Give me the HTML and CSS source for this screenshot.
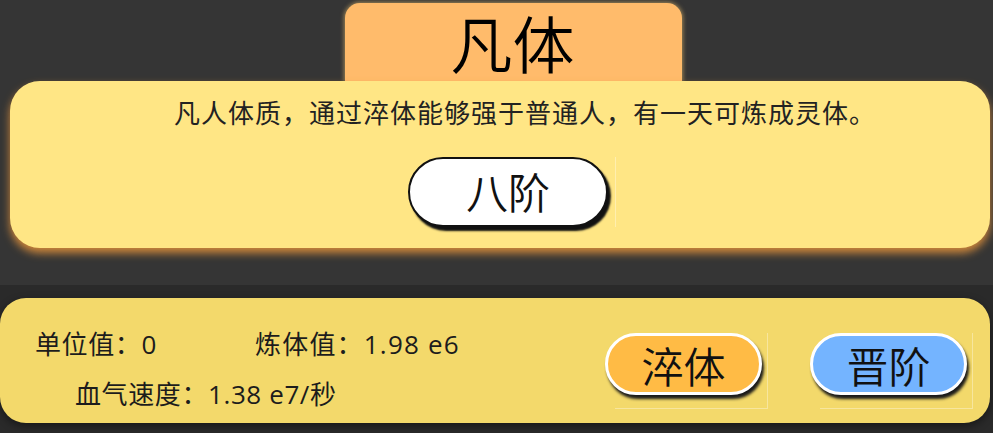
FILE: index.html
```html
<!DOCTYPE html>
<html lang="zh-CN">
<head>
<meta charset="utf-8">
<title>凡体</title>
<link rel="stylesheet" href="styles.css">
</head>
<body>
<div class="top">
  <div class="title-tab"><span class="title-text">凡体</span></div>
  <div class="card">
    <p class="desc">凡人体质，通过淬体能够强于普通人，有一天可炼成灵体。</p>
    <div class="level-row">
      <div class="level-wrap"><div class="level-btn">八阶</div></div>
    </div>
  </div>
</div>
<div class="bottom">
  <div class="panel">
    <div class="stats">
      <div class="stat unit">单位值：0</div>
      <div class="stat refine">炼体值：1.98 e6</div>
      <div class="stat speed">血气速度：1.38 e7/秒</div>
    </div>
    <div class="actions">
      <div class="act-wrap"><div class="act-btn orange">淬体</div></div>
      <div class="act-wrap"><div class="act-btn blue">晋阶</div></div>
    </div>
  </div>
</div>
</body>
</html>
```
FILE: styles.css
```css
html, body {
  margin: 0;
  padding: 0;
}
body {
  width: 993px;
  height: 433px;
  overflow: hidden;
  background: #2a2a2a;
  font-family: "Noto Sans CJK SC", "Noto Sans", sans-serif;
  font-weight: 350;
  color: #1c1c1c;
}
.top {
  height: 285px;
  background: #353535;
  padding-top: 3px;
  box-sizing: border-box;
}
.title-tab {
  margin-left: 345px;
  width: 337px;
  height: 78px;
  background: #ffbb6b;
  border-radius: 15px 15px 0 0;
  box-shadow: 0 0 4px 1px rgba(230, 190, 110, 0.6);
  text-align: center;
  box-sizing: border-box;
  padding-right: 2px;
}
.title-text {
  display: block;
  font-size: 62px;
  line-height: 78px;
  color: #000;
}
.card {
  position: relative;
  margin: 0 3px 0 10px;
  height: 167px;
  background: #ffe685;
  border-radius: 30px;
  box-shadow: 0 5px 9px rgba(235, 150, 60, 0.85);
  box-sizing: border-box;
  padding-top: 14px;
}
.desc {
  margin: 0;
  padding-left: 50px;
  text-align: center;
  font-size: 26px;
  font-weight: 400;
  letter-spacing: 1px;
  line-height: 34px;
  color: #222;
}
.level-row {
  display: flex;
  padding-left: 398px;
  margin-top: 28px;
}
.level-wrap {
  border-right: 1px solid rgba(255, 255, 255, 0.35);
  padding-right: 7px;
}
.level-btn {
  width: 196px;
  height: 66px;
  background: #fff;
  border: 2px solid #111;
  border-radius: 36px;
  box-shadow: 3px 4px 2px #111;
  text-align: center;
  font-size: 42px;
  line-height: 64px;
  color: #111;
}
.bottom {
  padding-top: 13px;
}
.panel {
  width: 990px;
  height: 125px;
  background: #f3d96b;
  border-radius: 26px;
  box-shadow: 0 3px 8px rgba(0, 0, 0, 0.45);
  display: flex;
  justify-content: space-between;
  box-sizing: border-box;
}
.stats {
  display: grid;
  grid-template-columns: 220px auto;
  grid-template-rows: 50px 44px;
  padding: 29px 0 0 35px;
  font-family: "Open Sans", "Noto Sans CJK SC", sans-serif;
  font-size: 26px;
  font-weight: 400;
  letter-spacing: 0.6px;
  line-height: 34px;
  color: #1c1c1c;
}
.refine {
  letter-spacing: 1.2px;
}
.speed {
  grid-column: 1 / 3;
  padding-left: 40px;
}
.actions {
  display: flex;
  gap: 52px;
  padding: 35px 17px 0 0;
}
.act-wrap {
  width: 153px;
  height: 76px;
  border-right: 1px solid rgba(255, 255, 255, 0.35);
  border-bottom: 1px solid rgba(255, 255, 255, 0.35);
  box-sizing: border-box;
}
.act-btn {
  margin-left: -10px;
  width: 157px;
  height: 62px;
  border: 3px solid #fff;
  border-radius: 32px;
  box-shadow: 2px 4px 3px #1a1a1a;
  text-align: center;
  font-size: 42px;
  line-height: 58px;
  color: #111;
  box-sizing: border-box;
}
.orange {
  background: #ffbb45;
}
.blue {
  background: #74b4ff;
}
```
